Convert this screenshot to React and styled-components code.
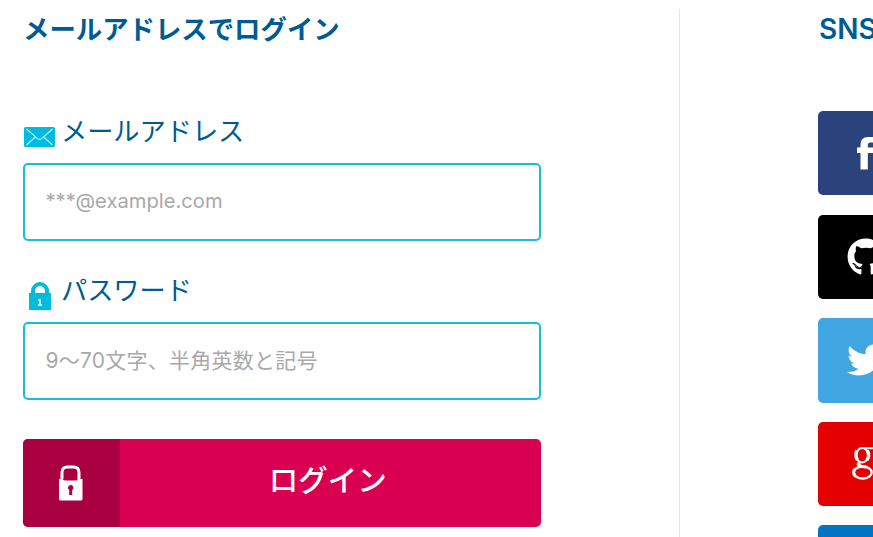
import styled, { createGlobalStyle } from 'styled-components';
import { FaGithub, FaTwitter } from 'react-icons/fa';

const FacebookIcon = () => (
  <svg width='18' height='33' viewBox='0 0 18 33'>
    <path
      d='M3.500 32.500V16H0v-5.500h3.500V7.500Q3.500 0 11 0h6v5.500h-3.500q-2.700 0-2.700 2.700v2.300H17l-.8 5.500h-5.400v16.500z'
      fill='#fff'
    />
  </svg>
);

const GoogleIcon = () => (
  <svg width='28' height='33' viewBox='0 0 28 33' fill='none' stroke='#fff'>
    <ellipse cx='10.200' cy='8.200' rx='6' ry='7.200' strokeWidth='2' />
    <path d='M5 3.500Q2.500 8.500 5.500 13M15.400 3.500Q18 8.500 15 13' strokeWidth='3.400' />
    <path d='M12 1.200h9' strokeWidth='2' />
    <path d='M8 15.300Q5 17 7 18.300T14 20' strokeWidth='3.200' />
    <ellipse cx='10.700' cy='25.500' rx='9' ry='6' strokeWidth='2.400' />
    <path d='M3 22Q0 25.500 3.500 29.500' strokeWidth='3' />
  </svg>
);

const providers = [
  { id: 1, color: '#2a437c', icon: <FacebookIcon /> },
  { id: 2, color: '#000000', icon: <FaGithub size={38} /> },
  { id: 3, color: '#41a7e2', icon: <FaTwitter size={38} /> },
  { id: 4, color: '#e50000', icon: <GoogleIcon /> },
  { id: 5, color: '#0274c3', icon: null },
];

const MailIcon = () => (
  <svg width='31' height='20' viewBox='0 0 31 20'>
    <rect width='31' height='20' rx='1.5' fill='#00bbe0' />
    <path
      d='M2.5 2 L13.5 11.6 Q15.5 13.2 17.5 11.6 L28.5 2 M2.5 18 L11.3 10 M28.5 18 L19.7 10'
      fill='none'
      stroke='#c8f2fa'
      strokeWidth='1.1'
    />
  </svg>
);

const PasswordIcon = () => (
  <svg width='22' height='28' viewBox='0 0 22 28'>
    <path
      d='M0 11h2V9a9 9 0 0 1 18 0v2h2v17H0z M6 11h10V9a5 5 0 0 0-10 0z'
      fill='#00bbe0'
      fillRule='evenodd'
    />
    <path d='M9 17h3v5h1v2H9v-2h1v-3H9z' fill='#c8f2fa' />
  </svg>
);

const LoginIcon = () => (
  <svg width='24' height='36' viewBox='0 0 24 36'>
    <path
      d='M3 14V7.500Q3 2 8.500 2h6Q20 2 20 7.500V15'
      fill='none'
      stroke='#fff'
      strokeWidth='3'
    />
    <path
      d='M0 14h3.500q1 1.500 3 1.500h10q2 0 3-1.500h4v20q0 1.500-1.500 1.500h-20.500Q0 35.500 0 34z'
      fill='#fff'
    />
    <path d='M11.700 20a2.800 2.800 0 0 1 1.500 5.100V30h-3v-4.900a2.800 2.800 0 0 1 1.500-5.100z' fill='#a90042' />
  </svg>
);

const App = () => {
  return (
    <>
      <GlobalStyle />
      <Wrapper>
        <LoginForm onSubmit={(e) => e.preventDefault()}>
          <Title>メールアドレスでログイン</Title>
          <Field>
            <Label htmlFor='email'>
              <LabelIcon>
                <MailIcon />
              </LabelIcon>
              <LabelText>メールアドレス</LabelText>
            </Label>
            <Input id='email' type='text' placeholder='***@example.com' />
          </Field>
          <Field>
            <Label htmlFor='password'>
              <LabelIcon>
                <PasswordIcon />
              </LabelIcon>
              <LabelText>パスワード</LabelText>
            </Label>
            <Input
              id='password'
              type='password'
              placeholder='9〜70文字、半角英数と記号'
              $wide
            />
          </Field>
          <LoginButton type='submit'>
            <ButtonIcon>
              <LoginIcon />
            </ButtonIcon>
            <ButtonText>ログイン</ButtonText>
          </LoginButton>
        </LoginForm>
        <Divider />
        <Social>
          <Title $latin>SNS</Title>
          <SocialList>
            {providers.map(({ id, color, icon }) => (
              <SocialButton key={id} type='button' $color={color}>
                <SocialIcon>{icon}</SocialIcon>
              </SocialButton>
            ))}
          </SocialList>
        </Social>
      </Wrapper>
    </>
  );
};

const GlobalStyle = createGlobalStyle`
  * {
    box-sizing: border-box;
  }
  body {
    margin: 0;
    background: #fff;
    color: #005b92;
    font-family: 'Liberation Sans', 'Noto Sans CJK JP', sans-serif;
    overflow: hidden;
  }
  button, input {
    font-family: inherit;
  }
  svg {
    display: block;
    flex-shrink: 0;
  }
`;

const Wrapper = styled.main`
  display: grid;
  grid-template-columns: 517.5px 2px 400px;
  column-gap: 138px;
  height: 537px;
  padding: 9px 0 0 23px;
  overflow: hidden;
`;

const LoginForm = styled.form`
  display: flex;
  flex-direction: column;
`;

const Title = styled.h2`
  height: 40px;
  margin: 0 0 62px;
  padding-left: ${({ $latin }) => ($latin ? '1px' : '0')};
  font-family: Inter, 'Noto Sans CJK JP', sans-serif;
  font-size: ${({ $latin }) => ($latin ? '28px' : '26.4px')};
  font-weight: ${({ $latin }) => ($latin ? 600 : 700)};
  line-height: 40px;
  white-space: nowrap;
`;

const Field = styled.div`
  height: 130px;
  margin-bottom: 29px;
`;

const Label = styled.label`
  display: flex;
  align-items: center;
  height: 40px;
  margin-bottom: 12px;
`;

const LabelIcon = styled.span`
  display: flex;
  justify-content: center;
  width: 33px;
  margin-right: 5px;
  padding-top: 11px;
`;

const LabelText = styled.span`
  padding-top: 2px;
  font-size: 26.2px;
  line-height: 40px;
`;

const Input = styled.input`
  display: block;
  width: 100%;
  height: 78px;
  padding: ${({ $wide }) => ($wide ? '0 20.5px 2px' : '0 20.5px 3px')};
  border: 2px solid #16bede;
  border-radius: 5px;
  outline: none;
  background: #fff;
  font-family: Inter, 'Noto Sans CJK JP', sans-serif;
  font-size: ${({ $wide }) => ($wide ? '21px' : '20.2px')};
  letter-spacing: ${({ $wide }) => ($wide ? '0.25px' : '0')};

  &::placeholder {
    color: #a9a9a9;
    opacity: 1;
  }
`;

const LoginButton = styled.button`
  display: flex;
  flex-shrink: 0;
  height: 88.5px;
  margin-top: 9.5px;
  padding: 0;
  border: 0;
  border-radius: 5px;
  overflow: hidden;
  background: #d90052;
  color: #fff;
`;

const ButtonIcon = styled.span`
  display: flex;
  align-items: center;
  justify-content: center;
  width: 97px;
  height: 100%;
  padding-right: 2px;
  background: #a90042;
`;

const ButtonText = styled.span`
  flex: 1;
  padding-right: 5px;
  font-size: 29.5px;
  font-weight: 500;
  line-height: 84px;
`;

const Divider = styled.div`
  width: 1.5px;
  background: #e6e6e6;
`;

const Social = styled.section`
  min-width: 0;
  margin-left: -0.5px;
`;

const SocialList = styled.div`
  display: flex;
  flex-direction: column;
  gap: 19.2px;
`;

const SocialButton = styled.button`
  display: flex;
  flex-shrink: 0;
  height: 84.4px;
  padding: 0;
  border: 0;
  border-radius: 5px;
  background: ${({ $color }) => $color};
  color: #fff;
`;

const SocialIcon = styled.span`
  display: flex;
  align-items: center;
  justify-content: center;
  width: 95.5px;
  height: 100%;
`;

export default App;
